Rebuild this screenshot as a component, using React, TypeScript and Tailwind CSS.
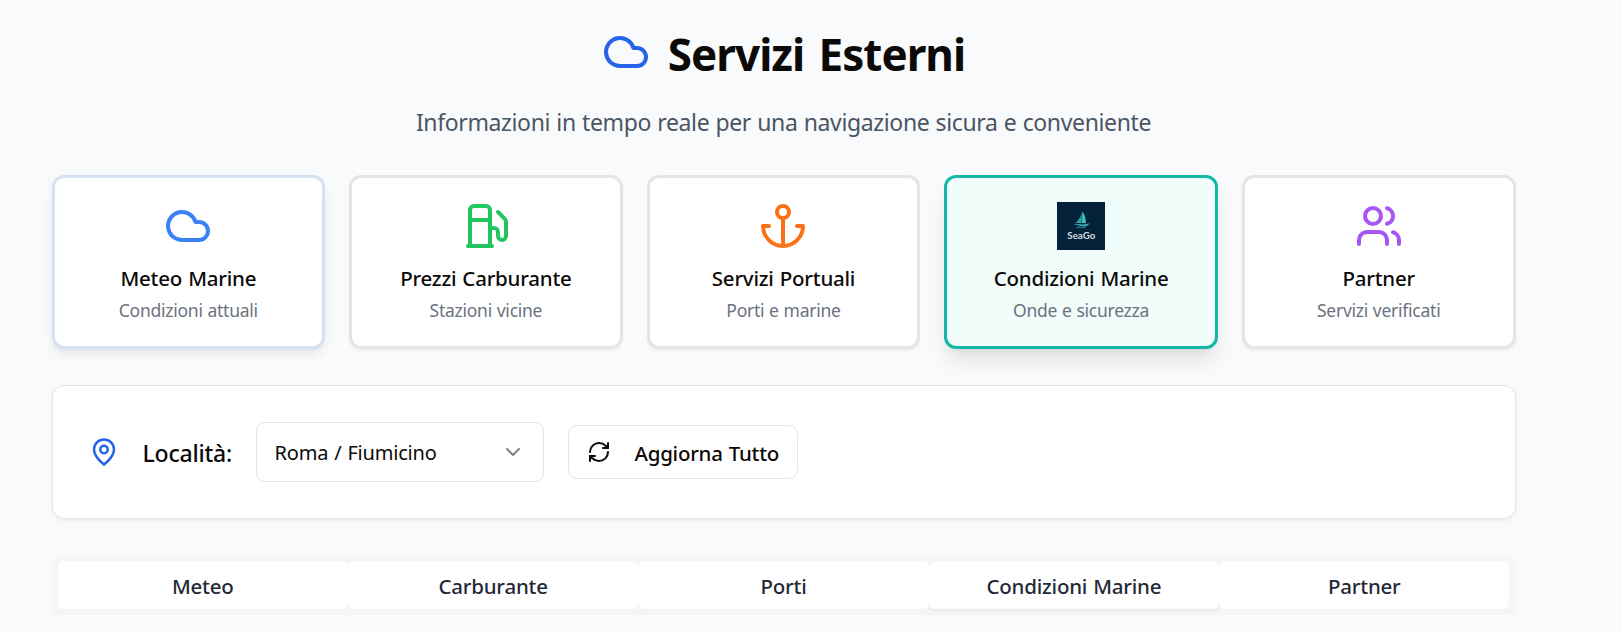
import React from "react";
import { ChevronDown, Cloud, RefreshCw } from "lucide-react";

function Icon({ className, children }: { className: string; children: React.ReactNode }) {
  return (
    <svg viewBox="0 0 24 24" fill="none" stroke="currentColor" strokeWidth="2" strokeLinecap="round" strokeLinejoin="round" className={className}>
      {children}
    </svg>
  );
}

function UsersIcon() {
  return (
    <Icon className="size-12 text-[#a855f7]">
      <path d="M16 21v-2a4 4 0 0 0-4-4H6a4 4 0 0 0-4 4v2" />
      <circle cx="9" cy="7" r="4" />
      <path d="M22 21v-2a4 4 0 0 0-3-3.87" />
      <path d="M16 3.13a4 4 0 0 1 0 7.75" />
    </Icon>
  );
}

function FuelIcon() {
  return (
    <Icon className="size-12 text-[#22c55e]">
      <path d="M3 22h12" />
      <path d="M4 9h10" />
      <path d="M14 22V4a2 2 0 0 0-2-2H6a2 2 0 0 0-2 2v18" />
      <path d="M14 13h2a2 2 0 0 1 2 2v2a2 2 0 0 0 4 0V9.83a2 2 0 0 0-.59-1.42L18 5" />
    </Icon>
  );
}

function AnchorIcon() {
  return (
    <Icon className="size-12 text-[#f97316]">
      <path d="M12 22V8" />
      <path d="M5 12H2a10 10 0 0 0 20 0h-3" />
      <circle cx="12" cy="5" r="3" />
    </Icon>
  );
}

function PinIcon() {
  return (
    <Icon className="size-[30px] shrink-0 text-[#2563eb]">
      <path d="M20 10c0 6-8 12-8 12s-8-6-8-12a8 8 0 0 1 16 0Z" />
      <circle cx="12" cy="10" r="3" />
    </Icon>
  );
}

function SeaGoLogo() {
  return (
    <svg viewBox="0 0 48 48" className="size-12">
      <rect width="48" height="48" fill="#04233a" />
      <path d="M24.6 8.6C24.8 13 22.5 18 18 21.3c2.200-.5 4.400-.5 6.600-.3Z" fill="#2ba5ab" />
      <path d="M25.300 9.600c2.700 3.500 3.800 7.500 3.500 11.800-1.200-.4-2.400-.5-3.800-.4Z" fill="#3dbfc3" />
      <path d="M16.300 22.500c5.500-.8 10.500.9 16.300-1.200-1 1.500-2.200 2.500-3.700 3.200-4.200.1-8.200-1.300-12.600-2Z" fill="#34b3b8" />
      <path d="M19.500 25.800c3-.9 5.500.3 8.600-.4" fill="none" stroke="#2a9ba3" strokeWidth="0.9" />
      <text x="24.300" y="36.600" textAnchor="middle" textLength="28" lengthAdjust="spacingAndGlyphs" fontFamily="Lato, sans-serif" fontWeight="700" fontSize="10.200" fill="#d3dade">SeaGo</text>
    </svg>
  );
}

const idle = "border-[#e7e5e4] bg-white shadow-[0_1.5px_3px_rgba(0,0,0,0.05)]";

const services = [
  {
    title: "Meteo Marine",
    text: "Condizioni attuali",
    icon: <Cloud className="size-12 text-[#3b82f6]" />,
    box: "border-[#d6e1f2] bg-white shadow-[0_6px_12px_-1.5px_rgba(0,0,0,0.07),0_3px_6px_-3px_rgba(0,0,0,0.07)]",
  },
  { title: "Prezzi Carburante", text: "Stazioni vicine", icon: <FuelIcon />, box: idle },
  { title: "Servizi Portuali", text: "Porti e marine", icon: <AnchorIcon />, box: idle },
  {
    title: "Condizioni Marine",
    text: "Onde e sicurezza",
    icon: <SeaGoLogo />,
    box: "border-[#14b8a6] bg-[#f0fdfa] shadow-[0_15px_22.5px_-4.5px_rgba(0,0,0,0.1),0_6px_9px_-6px_rgba(0,0,0,0.1)]",
  },
  { title: "Partner", text: "Servizi verificati", icon: <UsersIcon />, box: idle },
];

const tabs = ["Meteo", "Carburante", "Porti", "Condizioni Marine", "Partner"];

export default function App() {
  return (
    <div className="h-[633px] w-[1621px] overflow-hidden bg-[#f9fafc] pl-[51.5px] font-['Noto_Sans',sans-serif] text-[#0c0a09]">
      <main className="w-[1464px]">
        <header className="flex h-[175px] flex-col items-center pt-[22px]">
          <h1 className="flex h-[60px] items-center gap-[18px] text-[44px] font-bold tracking-[-1px] [word-spacing:4px]">
            <Cloud className="size-12 text-[#2563eb]" />
            <span className="pt-1">Servizi Esterni</span>
          </h1>
          <p className="mt-[22px] text-[23px] leading-[36px] tracking-[-0.36px] text-[#4b5563] [word-spacing:0.6px]">
            Informazioni in tempo reale per una navigazione sicura e conveniente
          </p>
        </header>

        <section className="grid grid-cols-5 gap-6">
          {services.map((s) => (
            <article key={s.title} className={`flex h-[174px] flex-col items-center rounded-xl border-[3px] pt-6 ${s.box}`}>
              {s.icon}
              <h3 className="mt-3 text-[20.5px] leading-[32px] font-medium tracking-[-0.22px] [word-spacing:1px]">{s.title}</h3>
              <p className="mt-px text-[17.5px] leading-[30px] tracking-[-0.25px] text-[#6b7280] [word-spacing:0.5px]">{s.text}</p>
            </article>
          ))}
        </section>

        <section className="mt-9 flex h-[134px] items-center gap-6 rounded-xl border border-[#e7e5e4] bg-white px-9 shadow-[0_1.5px_3px_rgba(0,0,0,0.05)]">
          <PinIcon />
          <span className="w-[89px] pt-[2px] text-[23px] font-medium tracking-[-0.2px] whitespace-nowrap">Località:</span>
          <button className="flex h-[60px] w-[288px] items-center justify-between rounded-[9px] border border-[#e7e5e4] px-[18px] text-[20px] tracking-[-0.2px] [word-spacing:1px]">
            <span className="pt-[2px]">Roma / Fiumicino</span>
            <ChevronDown className="size-6 opacity-50" />
          </button>
          <button className="flex h-[54px] w-[230px] items-center gap-6 rounded-[9px] border border-[#e7e5e4] pl-[18px] text-[20.5px] font-medium tracking-[-0.25px] whitespace-nowrap [word-spacing:1px]">
            <RefreshCw className="size-6 shrink-0" />
            <span className="pt-[2px]">Aggiorna Tutto</span>
          </button>
        </section>

        <nav className="mt-9 grid h-[60px] grid-cols-5 rounded-[9px] bg-[#f5f5f4] p-1.5">
          {tabs.map((t) => (
            <button
              key={t}
              className={`rounded-[6px] bg-white pt-[2px] text-[20.5px] font-medium tracking-[-0.22px] text-[#1f2937] [word-spacing:1px] ${t === "Condizioni Marine" ? "shadow-[0_1.5px_3px_rgba(0,0,0,0.05)]" : ""}`}
            >
              {t}
            </button>
          ))}
        </nav>
      </main>
    </div>
  );
}
